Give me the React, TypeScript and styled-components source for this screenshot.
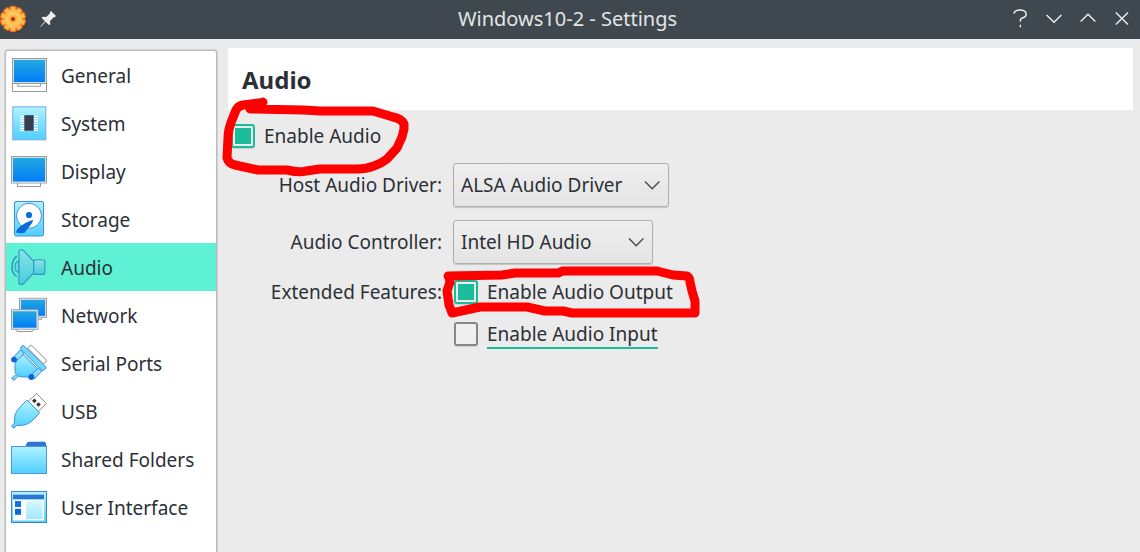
import React, { useState } from "react";
import styled, { createGlobalStyle, css } from "styled-components";

const GlobalStyle = createGlobalStyle`
  *, *::before, *::after { box-sizing: border-box; }
  body {
    margin: 0;
    background: #ebebeb;
    color: #2b3036;
    font-family: "Noto Sans", "Open Sans", sans-serif;
    font-size: 19px;
    line-height: 30px;
  }
  button, select, input { font: inherit; color: inherit; }
`;

const Window = styled.div`
  display: flex;
  flex-direction: column;
  height: 100vh;
  overflow: hidden;
`;

const TitleBar = styled.header`
  display: grid;
  grid-template-columns: 1fr auto 1fr;
  align-items: center;
  flex: none;
  height: 39px;
  padding: 0 1px 2px 0;
  background: #40484f;
  color: #e3e5e6;
`;

const TitleText = styled.h1`
  margin: 0;
  padding-right: 4px;
  font-size: 20px;
  font-weight: 400;
`;

const TitleGroup = styled.div<{ $end?: boolean }>`
  display: flex;
  align-items: center;
  justify-content: ${(p) => (p.$end ? "flex-end" : "flex-start")};
  gap: ${(p) => (p.$end ? 0 : 3)}px;
`;

const TitleButton = styled.button`
  display: flex;
  align-items: center;
  justify-content: center;
  width: 34px;
  height: 36px;
  padding: 0;
  border: 0;
  background: none;
`;

const Body = styled.div`
  display: flex;
  flex: 1;
  min-height: 0;
  gap: 11px;
  padding: 0 7px 0 5px;
`;

const Sidebar = styled.nav`
  flex: none;
  width: 212px;
  margin-top: 11px;
  border: solid #bcbcbc;
  border-width: 1px 1px 0;
  border-radius: 3px 3px 0 0;
  box-shadow: 0 0 0 1px #d2d2d2;
  background: #fff;
`;

const NavItem = styled.button<{ $active: boolean }>`
  display: flex;
  align-items: center;
  gap: 14px;
  width: 100%;
  height: 48px;
  padding: 0 5px;
  border: 0;
  background: ${(p) => (p.$active ? "#5ff1d4" : "transparent")};
  text-align: left;
  white-space: nowrap;
`;

const NavText = styled.span`
  padding-top: 2px;
`;

const NavIcon = styled.svg`
  flex: none;
  width: 36px;
  height: 36px;
`;

const Main = styled.main`
  flex: 1;
  min-width: 0;
  padding-top: 9px;
`;

const PageHeader = styled.div`
  display: flex;
  align-items: center;
  height: 62px;
  padding: 2px 14px 0;
  background: #fff;
`;

const PageTitle = styled.h2`
  margin: 0;
  font-size: 24px;
  font-weight: 700;
`;

const Form = styled.form`
  display: flex;
  flex-direction: column;
  gap: 12px;
  padding: 11px 0 0 3px;
`;

const Fields = styled.div`
  display: grid;
  grid-template-columns: 211px 1fr;
  column-gap: 11px;
  row-gap: 13px;
`;

const FieldLabel = styled.label`
  align-self: center;
  text-align: right;
`;

const GroupLabel = styled.div`
  text-align: right;
`;

const CheckList = styled.div`
  display: flex;
  flex-direction: column;
  gap: 12px;
  padding-left: 1px;
`;

const CheckRow = styled.div`
  position: relative;
  display: flex;
`;

const CheckLabel = styled.label`
  display: flex;
  align-items: center;
  gap: 9px;
`;

const CheckText = styled.span<{ $focused?: boolean }>`
  ${(p) => p.$focused && css`box-shadow: inset 0 -2px #1abc9c;`}
`;

const CheckBox = styled.input`
  appearance: none;
  width: 24px;
  height: 24px;
  margin: 0;
  padding: 2px;
  border: 2px solid #85888a;
  border-radius: 3px;
  background: #efefef;
  box-shadow: 0 1px 1px #d0d0d0;

  &:checked {
    border-color: #1abc9c;
    background: #1abc9c content-box;
  }
`;

const SelectBox = styled.div<{ $width: number }>`
  display: grid;
  align-items: center;
  width: ${(p) => p.$width}px;

  > * { grid-area: 1 / 1; }
  > svg {
    justify-self: end;
    margin-right: 8px;
    pointer-events: none;
  }
`;

const Select = styled.select`
  appearance: none;
  width: 100%;
  height: 44px;
  padding: 0 7px;
  border: 1px solid #b0b0b0;
  border-radius: 3px;
  background: linear-gradient(#eeeeee, #e4e4e4);
  box-shadow: 0 1px 1px #c4c4c4;
  line-height: 30px;
`;

const Marker = styled.svg<{ $top: number; $left: number }>`
  position: absolute;
  z-index: 1;
  top: ${(p) => p.$top}px;
  left: ${(p) => p.$left}px;
  fill: none;
  stroke: #fe0000;
  stroke-width: 9;
  stroke-linecap: round;
  stroke-linejoin: round;
  pointer-events: none;
`;

const teeth = [0, 36, 72, 108, 144, 180, 216, 252, 288, 324];

const GearIcon = () => (
  <svg width="28" height="34" viewBox="0 0 28 34" aria-hidden="true">
    <defs>
      <radialGradient id="gear">
        <stop offset="0" stopColor="#ffa632" />
        <stop offset="0.6" stopColor="#ffc95e" />
        <stop offset="1" stopColor="#ffb347" />
      </radialGradient>
    </defs>
    <circle cx="14.5" cy="18.5" r="12.5" fill="#2a2a2a" opacity="0.5" />
    <g fill="#e0701c">
      {teeth.map((a) => (
        <rect key={a} x="9.4" y="3.8" width="7.2" height="7" rx="2" transform={`rotate(${a} 13 17)`} />
      ))}
      <circle cx="13" cy="17" r="10.8" />
    </g>
    <g fill="#ffb84e">
      {teeth.map((a) => (
        <rect key={a} x="10.6" y="5" width="4.8" height="7" rx="1.4" transform={`rotate(${a} 13 17)`} />
      ))}
      <circle cx="13" cy="17" r="9.4" fill="url(#gear)" />
    </g>
    <circle cx="13" cy="17" r="2.6" fill="#d96a14" />
    <circle cx="13" cy="17" r="1.2" fill="#6e2c08" />
  </svg>
);

const PinIcon = () => (
  <svg width="18" height="18" viewBox="0 0 18 18" fill="#eef0f0" aria-hidden="true">
    <path d="M12 1 17 6 15.7 7.2 15 6.9 11 11 11.3 14 10.2 15.2 6.6 11.8 2 16.6 1.2 17 1.4 16.2 6 11.2 2.6 7.8 3.8 6.8 7.2 7 11.2 3 10.9 2.1Z" />
  </svg>
);

const TitleGlyph = ({ d }: { d: string }) => (
  <svg width="18" height="20" viewBox="0 0 18 20" fill="none" stroke="#eef0f0" strokeWidth="1.4" aria-hidden="true">
    <path d={d} />
  </svg>
);

const Chevron = () => (
  <svg width="18" height="12" viewBox="0 0 18 12" fill="none" stroke="#4a4e52" strokeWidth="1.5" aria-hidden="true">
    <path d="M2 2.5 9.2 9.7 16.4 2.5" />
  </svg>
);

const Gradients = () => (
  <svg width="0" height="0" style={{ position: "absolute" }} aria-hidden="true">
    <defs>
      <linearGradient id="screen" x2="0" y2="1">
        <stop offset="0" stopColor="#23aae0" />
        <stop offset="1" stopColor="#007cf8" />
      </linearGradient>
      <linearGradient id="ice" x2="0" y2="1">
        <stop offset="0" stopColor="#b0f2ff" />
        <stop offset="1" stopColor="#4fcfff" />
      </linearGradient>
      <linearGradient id="pane" x2="0" y2="1">
        <stop offset="0" stopColor="#d6f8ff" />
        <stop offset="1" stopColor="#a4e6ff" />
      </linearGradient>
      <linearGradient id="horn" x2="0" y2="1">
        <stop offset="0" stopColor="#86e4e2" />
        <stop offset="1" stopColor="#48cde0" />
      </linearGradient>
    </defs>
  </svg>
);

const icons: Record<string, React.ReactNode> = {
  General: (
    <g stroke="#999b9e">
      <rect x="1.5" y="1.5" width="34" height="33" fill="#fff" />
      <rect x="2.5" y="2.5" width="32" height="23" fill="url(#screen)" stroke="#d9dfe2" />
      <path d="M1.5 26.5H35.5M6.8 26.5V29.3H29.5V26.5" fill="none" />
    </g>
  ),
  System: (
    <>
      <rect x="1.8" y="1.8" width="33" height="33" fill="url(#ice)" stroke="#79a9e8" />
      <path d="M9 11.3H27M9 13.7H27M9 16.1H27M9 18.5H27M9 20.9H27M9 23.3H27M9 25.3H27" stroke="#fff" strokeWidth="1.2" />
      <rect x="13.3" y="10.2" width="9.4" height="15.6" fill="#363d4c" />
    </>
  ),
  Display: (
    <g stroke="#999b9e">
      <rect x="6.5" y="28" width="23" height="5.5" fill="#fff" />
      <rect x="0.5" y="3.5" width="35" height="26.5" fill="#fff" />
      <rect x="1.5" y="4.5" width="33" height="24.5" fill="url(#screen)" stroke="#d9dfe2" />
    </g>
  ),
  Storage: (
    <>
      <rect x="3.5" y="0.5" width="29" height="34.5" rx="1.5" fill="url(#ice)" stroke="#3b8fe0" />
      <circle cx="18" cy="14.8" r="12.5" fill="#fff" stroke="#4291dd" />
      <circle cx="18" cy="14" r="3.1" fill="#0d6adb" />
      <path d="M22 18.8Q15 21 9 25.8Q4.8 28.8 5.4 31.8Q10 32.6 13.6 31.8L21.4 21.4Z" fill="#0d6adb" />
    </>
  ),
  Audio: (
    <g stroke="#3195c2" strokeWidth="1.1">
      <rect x="22.5" y="10.8" width="11.4" height="14.6" rx="2" fill="url(#horn)" />
      <path d="M8 11.8Q4 13 4 18T8 23.5Z" fill="#67dce0" />
      <path d="M9 .7Q8 .7 8 2V34Q8 35.4 9 35.4H11Q12 35.4 12.6 34.6L22.7 24V12.3L12.6 1.6Q11.6 .7 10.6 .7Z" fill="url(#horn)" />
      <path d="M5.8 7.2Q1 11 1 18T5.8 27.4" fill="none" strokeWidth="1.6" />
    </g>
  ),
  Network: (
    <g stroke="#999b9e">
      <path d="M14 20V22.5H30.5V20" fill="#fff" />
      <rect x="8.5" y="1.3" width="27" height="19" fill="#fff" />
      <rect x="9.5" y="2.3" width="25" height="17" fill="url(#screen)" stroke="#d9dfe2" />
      <path d="M4.5 32 6 34.5H21.5L23 32" fill="#fff" />
      <rect x="0.5" y="12.8" width="26.5" height="19.4" fill="#fff" />
      <rect x="1.5" y="13.8" width="24.5" height="17.4" fill="url(#screen)" stroke="#d9dfe2" />
    </g>
  ),
  "Serial Ports": (
    <g stroke="#3f8fd8" strokeLinejoin="round">
      <path d="M16.6 3 19 .8Q20.2.1 21.4 1.1L35 14.8Q35.7 16 34.8 17L32.4 19Z" fill="#fff" stroke="#8d8f93" />
      <path d="M6 29 .6 33.2 3 35.3 8 30.6Z" fill="url(#ice)" />
      <path d="M10.5 8 4 18.5V26Q4.5 31.5 11.5 32H17.5L28 25Z" fill="url(#ice)" />
      <path d="M9.5 4.8 2 12.6 5.6 15.6 13 8.7ZM27.3 23 19.6 30.4 23 34 31 26.2Z" fill="#8ae2ff" />
      <path d="M12.5.5Q11.6.2 10.8 1L9.6 2.8Q9.2 3.8 10 4.6L30.8 25.4Q31.8 26 32.6 25.2L34.8 23.2Q35.4 22.2 34.6 21.4Z" fill="#75d9ff" />
      <circle cx="3" cy="14.6" r="2.9" fill="#1264d0" stroke="none" />
      <circle cx="20.3" cy="32" r="3" fill="#1264d0" stroke="none" />
    </g>
  ),
  USB: (
    <g stroke="#3f8fd8" strokeLinejoin="round">
      <path d="M16.5 9 25.6.7 35.3 10.3 27 19Z" fill="#fff" stroke="#8d8f93" />
      <rect x="21.7" y="6.1" width="3.3" height="3.3" fill="#333" stroke="none" transform="rotate(45 23.3 7.8)" />
      <rect x="25.9" y="9.8" width="3.3" height="3.3" fill="#333" stroke="none" transform="rotate(45 27.5 11.4)" />
      <path d="M15.6 7.5Q16.2 7.2 17 8L28 19Q28.5 19.7 28 20.4Q19 32 11.6 32.2L5.2 32.7 2.8 35.2 .7 33 3.6 29.8V24Q4 18 15.6 7.5Z" fill="url(#ice)" />
    </g>
  ),
  "Shared Folders": (
    <>
      <path d="M14 6 16 1.8Q16.6.7 18 .7H33.5Q34.4.7 34.7 1.8L35.6 6Z" fill="#2f74d0" />
      <rect x="0.5" y="5.5" width="35" height="27" fill="url(#ice)" stroke="#4f97dc" />
    </>
  ),
  "User Interface": (
    <>
      <rect x="0.5" y="2.5" width="35" height="31" fill="url(#ice)" stroke="#4186d4" />
      <rect x="2" y="5.7" width="31" height="4.4" fill="#2f74d0" />
      <rect x="2" y="11" width="31" height="20.5" fill="#fff" />
      <rect x="4" y="12" width="6" height="6" fill="#1b6fd8" />
      <rect x="4" y="19.8" width="6" height="6" fill="#0b68d8" />
      <rect x="15" y="12" width="16.5" height="18" fill="url(#pane)" />
    </>
  ),
};

const titleButtons = [
  { name: "Help", d: "M3 4.6Q3.4 1 9 1T15.2 5Q15.2 8 12 8.7T9.4 12.6M9.4 15.7V18.2" },
  { name: "Minimize", d: "M1.6 6 9 13.2 16.4 6" },
  { name: "Maximize", d: "M1.6 12.4 9 5.2 16.4 12.4" },
  { name: "Close", d: "M2.8 3.6 15 15.6M15 3.6 2.8 15.6" },
];

export default function App() {
  const [page, setPage] = useState("Audio");
  return (
    <Window>
      <GlobalStyle />
      <Gradients />
      <TitleBar>
        <TitleGroup>
          <GearIcon />
          <TitleButton type="button" aria-label="Keep above others">
            <PinIcon />
          </TitleButton>
        </TitleGroup>
        <TitleText>Windows10-2 - Settings</TitleText>
        <TitleGroup $end>
          {titleButtons.map((b) => (
            <TitleButton key={b.name} type="button" aria-label={b.name}>
              <TitleGlyph d={b.d} />
            </TitleButton>
          ))}
        </TitleGroup>
      </TitleBar>
      <Body>
        <Sidebar>
          {Object.keys(icons).map((name) => (
            <NavItem key={name} type="button" $active={name === page} onClick={() => setPage(name)}>
              <NavIcon viewBox="0 0 36 36" aria-hidden="true">{icons[name]}</NavIcon>
              <NavText>{name}</NavText>
            </NavItem>
          ))}
        </Sidebar>
        <Main>
          <PageHeader>
            <PageTitle>Audio</PageTitle>
          </PageHeader>
          <Form>
            <CheckRow>
              <CheckLabel>
                <CheckBox type="checkbox" defaultChecked />
                <CheckText>Enable Audio</CheckText>
              </CheckLabel>
              <Marker $top={-26} $left={-11} width="190" height="85" viewBox="220 95 190 85" aria-hidden="true">
                <path d="M263 102 259 103 243 105Q238 106 236 110L232 120Q228 130 228 138L227 158Q229 164 235 165L258 170H287Q300 173 306 171L320 169H357Q366 169 374 166T387 159L397 148 402 137 404 129V124Q402 119 393 117L373 111H320L303 110 250 109" />
              </Marker>
            </CheckRow>
            <Fields>
              <FieldLabel htmlFor="driver">Host Audio Driver:</FieldLabel>
              <SelectBox $width={216}>
                <Select id="driver">
                  <option>ALSA Audio Driver</option>
                </Select>
                <Chevron />
              </SelectBox>
              <FieldLabel htmlFor="controller">Audio Controller:</FieldLabel>
              <SelectBox $width={200}>
                <Select id="controller">
                  <option>Intel HD Audio</option>
                </Select>
                <Chevron />
              </SelectBox>
              <GroupLabel id="features">Extended Features:</GroupLabel>
              <CheckList role="group" aria-labelledby="features">
                <CheckRow>
                  <CheckLabel>
                    <CheckBox type="checkbox" defaultChecked />
                    <CheckText>Enable Audio Output</CheckText>
                  </CheckLabel>
                  <Marker $top={-16} $left={-14} width="265" height="65" viewBox="440 260 265 65" aria-hidden="true">
                    <path d="M448 275 502 274 515 272H558L563 270H657L673 274 687 275Q690 277 690 281L692 290 695 300V312H572L563 310H545L527 306H480L452 312 449 304 447 290 450 281 449 276" />
                  </Marker>
                </CheckRow>
                <CheckRow>
                  <CheckLabel>
                    <CheckBox type="checkbox" />
                    <CheckText $focused>Enable Audio Input</CheckText>
                  </CheckLabel>
                </CheckRow>
              </CheckList>
            </Fields>
          </Form>
        </Main>
      </Body>
    </Window>
  );
}
